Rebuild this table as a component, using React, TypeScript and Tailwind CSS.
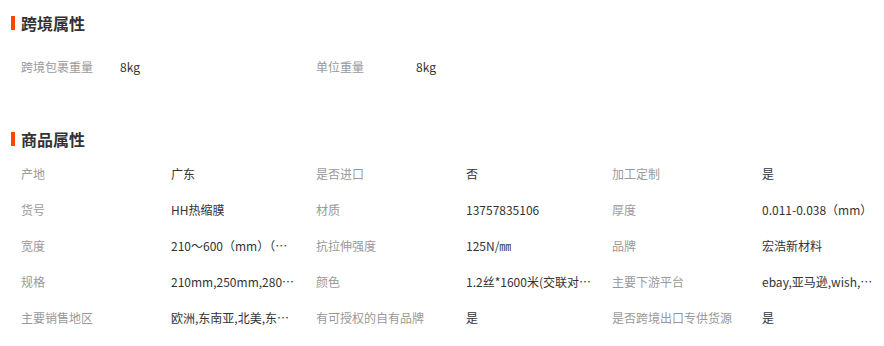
const font = { fontFamily: '"Noto Sans CJK SC", "Microsoft YaHei", sans-serif' };

const crossBorder = [
  ["跨境包裹重量", "8kg"],
  ["单位重量", "8kg"],
];

const attrs = [
  ["产地", "广东"],
  ["是否进口", "否"],
  ["加工定制", "是"],
  ["货号", "HH热缩膜"],
  ["材质", "13757835106"],
  ["厚度", "0.011-0.038（mm）"],
  ["宽度", "210～600（mm）（mm）"],
  ["抗拉伸强度", "125N/㎜"],
  ["品牌", "宏浩新材料"],
  ["规格", "210mm,250mm,280mm,300mm,350mm"],
  ["颜色", "1.2丝*1600米(交联对折膜)"],
  ["主要下游平台", "ebay,亚马逊,wish,速卖通"],
  ["主要销售地区", "欧洲,东南亚,北美,东北亚,南美,非洲,中东"],
  ["有可授权的自有品牌", "是"],
  ["是否跨境出口专供货源", "是"],
];

function Title({ text }: { text: string }) {
  return (
    <div className="flex items-center h-[34px] pl-[11px]">
      <span className="w-[4px] h-[14px] bg-[#ff4400]" />
      <span className="ml-[6px] text-[16px] font-bold text-[#333]">{text}</span>
    </div>
  );
}

export default function App() {
  return (
    <div className="w-[884px] h-[346px] bg-white text-[12px] overflow-hidden" style={font}>
      <div className="pt-[6px]">
        <Title text="跨境属性" />
        <div className="mt-[9px] pl-[21px] grid grid-cols-[99px_196px_100px_1fr]">
          {crossBorder.map(([k, v]) => (
            <div key={k} className="contents">
              <div className="h-[36px] flex items-center text-[#999]">{k}</div>
              <div className="h-[36px] flex items-center text-[#333]">{v}</div>
            </div>
          ))}
        </div>
      </div>

      <div className="mt-[37px]">
        <Title text="商品属性" />
        <div className="pl-[21px] grid grid-cols-[150px_145px_150px_146px_150px_1fr]">
          {attrs.map(([k, v], i) => (
            <div key={k} className="contents">
              <div className="h-[36px] flex items-center text-[#999] whitespace-nowrap">{k}</div>
              <div
                className={
                  i % 3 === 2
                    ? "h-[36px] flex items-center text-[#333] pr-[4px] min-w-0"
                    : "h-[36px] flex items-center text-[#333] pr-[18px] min-w-0"
                }
              >
                <span className="truncate">{v}</span>
              </div>
            </div>
          ))}
        </div>
      </div>
    </div>
  );
}
